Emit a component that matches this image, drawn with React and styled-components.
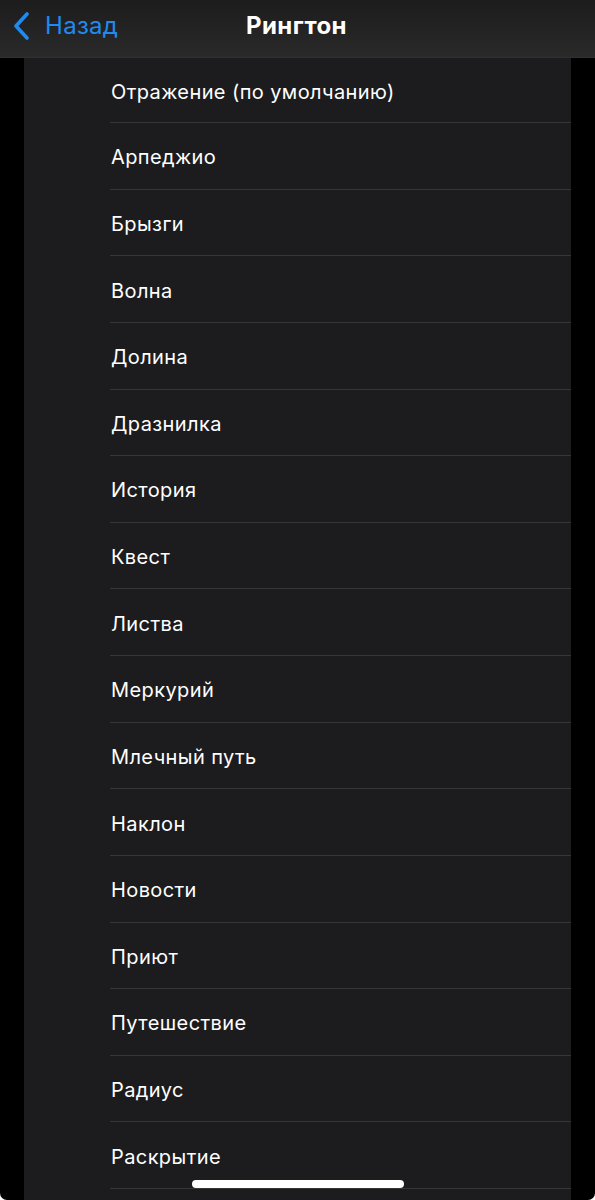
import React from "react"
import styled, { createGlobalStyle } from "styled-components"

const GlobalStyle = createGlobalStyle`
  html, body {
    margin: 0;
    padding: 0;
    background: #ffffff;
  }
  body {
    font-family: Inter, "Noto Sans", "Liberation Sans", sans-serif;
    -webkit-font-smoothing: antialiased;
  }
`

const tones = [
  "Отражение (по умолчанию)",
  "Арпеджио",
  "Брызги",
  "Волна",
  "Долина",
  "Дразнилка",
  "История",
  "Квест",
  "Листва",
  "Меркурий",
  "Млечный путь",
  "Наклон",
  "Новости",
  "Приют",
  "Путешествие",
  "Радиус",
  "Раскрытие",
]

const Screen = styled.div`
  width: 595px;
  height: 1200px;
  background: #000;
  display: flex;
  flex-direction: column;
  overflow: hidden;
  border-radius: 0 0 7px 7px;
  position: relative;
`

const NavBar = styled.div`
  height: 58px;
  flex-shrink: 0;
  display: grid;
  grid-template-columns: 1fr auto 1fr;
  align-items: center;
  padding-bottom: 6px;
  background: linear-gradient(#1c1c1c, #2a2a2a);
  border-bottom: 1px solid #303030;
  box-sizing: border-box;
`

const BackButton = styled.div`
  display: flex;
  align-items: center;
  gap: 14px;
  padding-left: 13px;
  color: #1f8bf0;
  font-size: 24px;
  letter-spacing: 0.3px;
`

const Title = styled.div`
  color: #fff;
  font-size: 24px;
  font-weight: 700;
  letter-spacing: 0.4px;
  margin-left: -2px;
`

const Panel = styled.div`
  flex: 1;
  margin: 0 24px;
  background: #1c1c1e;
  overflow: hidden;
`

const Row = styled.div`
  height: ${props => props.$height || "66.63px"};
  margin-left: 86px;
  display: flex;
  align-items: center;
  padding-top: 3px;
  padding-left: 1px;
  box-sizing: border-box;
  border-bottom: 1px solid #363638;
  color: #fff;
  font-size: 20px;
  letter-spacing: 0.4px;
`

const HomeIndicator = styled.div`
  position: absolute;
  left: 192px;
  bottom: 12px;
  width: 212px;
  height: 8px;
  border-radius: 4px;
  background: #fff;
`

const Chevron = () => (
  <svg width="18" height="28" viewBox="0 0 18 28" fill="none">
    <path d="M14 2 L3 14 L14 26" stroke="#1f8bf0" strokeWidth="3.6" strokeLinecap="round" strokeLinejoin="round" />
  </svg>
)

export default function App() {
  return (
    <>
      <GlobalStyle />
      <Screen>
        <NavBar>
          <BackButton>
            <Chevron />
            Назад
          </BackButton>
          <Title>Рингтон</Title>
          <div />
        </NavBar>
        <Panel>
          {tones.map((name, i) => (
            <Row key={name} $height={i === 0 ? "65px" : undefined}>
              {name}
            </Row>
          ))}
        </Panel>
        <HomeIndicator />
      </Screen>
    </>
  )
}
